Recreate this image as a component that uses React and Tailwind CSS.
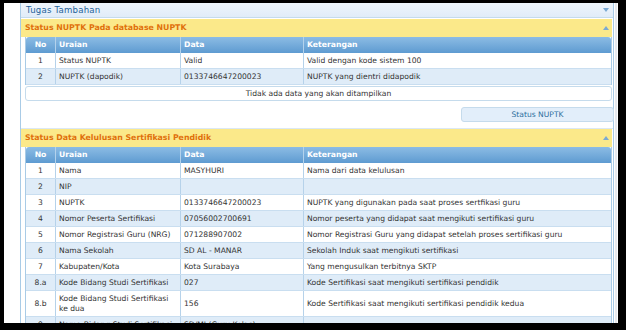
const font = { fontFamily: '"DejaVu Sans", Verdana, sans-serif' };

const nuptkRows = [
  ["1", "Status NUPTK", "Valid", "Valid dengan kode sistem 100"],
  ["2", "NUPTK (dapodik)", "0133746647200023", "NUPTK yang dientri didapodik"],
];

const lulusRows = [
  ["1", "Nama", "MASYHURI", "Nama dari data kelulusan"],
  ["2", "NIP", "", ""],
  ["3", "NUPTK", "0133746647200023", "NUPTK yang digunakan pada saat proses sertfikasi guru"],
  ["4", "Nomor Peserta Sertifikasi", "07056002700691", "Nomor peserta yang didapat saat mengikuti sertifikasi guru"],
  ["5", "Nomor Registrasi Guru (NRG)", "071288907002", "Nomor Registrasi Guru yang didapat setelah proses sertifikasi guru"],
  ["6", "Nama Sekolah", "SD AL - MANAR", "Sekolah Induk saat mengikuti sertifikasi"],
  ["7", "Kabupaten/Kota", "Kota Surabaya", "Yang mengusulkan terbitnya SKTP"],
  ["8.a", "Kode Bidang Studi Sertifikasi", "027", "Kode Sertifikasi saat mengikuti sertifikasi pendidik"],
  ["8.b", "Kode Bidang Studi Sertifikasi|ke dua", "156", "Kode Sertifikasi saat mengikuti sertifikasi pendidik kedua"],
  ["9", "Nama Bidang Studi Sertifikasi", "SD/MI (Guru Kelas)", ""],
];

const cols = "grid grid-cols-[30px_125px_123px_1fr]";

const Caret = ({ up }) => (
  <svg width="6" height="4" viewBox="0 0 6 4" className="mr-[2px]">
    {up ? <path d="M0 4 L3 0 L6 4 Z" fill="#7aa9d3" /> : <path d="M0 0 L6 0 L3 4 Z" fill="#7aa9d3" />}
  </svg>
);

const YellowBar = ({ title }) => (
  <div className="flex items-center justify-between h-[18px] bg-[#fbe98a] mr-[1px] pl-[4px] pr-[1px]">
    <span className="text-[7.8px] font-bold text-[#e0700c]">{title}</span>
    <Caret up />
  </div>
);

const HeadRow = () => (
  <div className={`${cols} h-[16px] bg-gradient-to-b from-[#8cbce4] to-[#5e9bd1] text-white font-bold text-[7.7px] rounded-t-[3px]`}>
    <div className="flex items-center justify-center border-r border-[#b3d2ec]">No</div>
    <div className="flex items-center pl-[3px] border-r border-[#b3d2ec]">Uraian</div>
    <div className="flex items-center pl-[3px] border-r border-[#b3d2ec]">Data</div>
    <div className="flex items-center pl-[3px]">Keterangan</div>
  </div>
);

const BodyRow = ({ row, i }) => {
  const [no, uraian, data, ket] = row;
  const tall = uraian.includes("|");
  const h = tall ? "h-[26px]" : "h-[16px]";
  const bg = i % 2 === 0 ? "bg-white" : "bg-[#dfecf8]";
  return (
    <div className={`${cols} ${h} ${bg} border-b border-[#c9def0] text-[7.6px] text-[#333]`}>
      <div className="flex items-center justify-center border-r border-[#b6d2ea]">{no}</div>
      <div className="flex items-center pl-[3px] border-r border-[#b6d2ea] leading-[10px]">
        {tall ? (
          <span>
            {uraian.split("|")[0]}
            <br />
            {uraian.split("|")[1]}
          </span>
        ) : (
          uraian
        )}
      </div>
      <div className="flex items-center pl-[3px] border-r border-[#b6d2ea]">{data}</div>
      <div className="flex items-center pl-[3px] whitespace-nowrap overflow-hidden">{ket}</div>
    </div>
  );
};

export default function App() {
  return (
    <div className="h-[330px] w-[626px] bg-black pt-[3px] pl-[4px] pr-[8px] pb-[7px] overflow-hidden" style={font}>
      <div className="h-full bg-white flex pl-[16px] overflow-hidden">
        <div className="w-[594px] border-l border-r border-[#a9cbe6] flex flex-col">
          <div className="flex items-center justify-between h-[15px] shrink-0 bg-gradient-to-b from-[#eef5fc] to-[#e1ecf8] border-b border-[#c5dbec] pl-[5px] pr-[2px]">
            <span className="text-[8.6px] text-[#24639a] tracking-[0.2px]">Tugas Tambahan</span>
            <Caret />
          </div>

          <div className="mt-[1px]">
            <YellowBar title="Status NUPTK Pada database NUPTK" />
            <div className="ml-[4px] mr-[1px] border-l border-r border-[#a9cbe6]">
              <HeadRow />
              {nuptkRows.map((r, i) => (
                <BodyRow key={i} row={r} i={i} />
              ))}
            </div>
            <div className="ml-[4px] mr-[1px] mt-[1px] h-[15px] border border-[#c5dbec] rounded-[3px] flex items-center justify-center text-[7.6px] text-[#333]">
              Tidak ada data yang akan ditampilkan
            </div>
            <div className="flex justify-end mt-[6px]">
              <button className="w-[153px] h-[15px] mr-[-1px] bg-[#e2eefa] border border-[#c5dbec] rounded-[3px] text-[7.6px] text-[#2e6e9e] flex items-center justify-center">
                Status NUPTK
              </button>
            </div>
          </div>

          <div className="mt-[6px] border-t border-[#dbe8f4]">
            <YellowBar title="Status Data Kelulusan Sertifikasi Pendidik" />
            <div className="ml-[4px] mr-[1px] border-l border-r border-[#a9cbe6]">
              <HeadRow />
              {lulusRows.map((r, i) => (
                <BodyRow key={i} row={r} i={i} />
              ))}
            </div>
          </div>
        </div>
        <div className="w-[1px]" />
        <div className="w-[2px] bg-[#e6e9ee]" />
      </div>
    </div>
  );
}
